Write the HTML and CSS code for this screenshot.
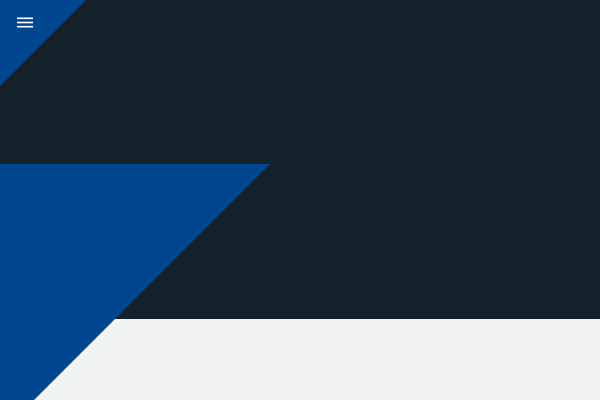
FILE: index.html
```html
<!DOCTYPE html>
<html>
<head>
<meta charset="utf-8">
<link rel="stylesheet" href="styles.css">
</head>
<body>
<div class="page">
  <div class="shape shape-top"></div>
  <div class="shape shape-mid"></div>
  <section class="hero">
    <header class="header">
      <button class="menu" aria-label="Menu">
        <svg width="16" height="11" viewBox="0 0 16 11"><rect x="0" y="0.5" width="16" height="1.6" fill="#fff"/><rect x="0" y="4.7" width="16" height="1.6" fill="#fff"/><rect x="0" y="8.9" width="16" height="1.6" fill="#fff"/></svg>
      </button>
    </header>
  </section>
  <section class="content"></section>
</div>
</body>
</html>
```
FILE: styles.css
```css
html, body {
  margin: 0;
  padding: 0;
  font-family: "Roboto", "Liberation Sans", sans-serif;
  overflow: hidden;
}
.page {
  position: relative;
  width: 600px;
  height: 400px;
  overflow: hidden;
  background: #f1f3f2;
}
.hero {
  height: 319px;
  background: #15212b;
}
.content {
  height: 81px;
  background: #f1f3f2;
}
.header {
  position: relative;
  z-index: 2;
  display: flex;
  padding: 17px 0 0 17px;
}
.menu {
  display: flex;
  padding: 0;
  margin: 0;
  border: 0;
  background: transparent;
  cursor: pointer;
}
.shape {
  position: absolute;
  left: 0;
  background: #00478f;
  z-index: 1;
}
.shape-top {
  top: 0;
  width: 86px;
  height: 86px;
  clip-path: polygon(0 0, 100% 0, 0 100%);
}
.shape-mid {
  top: 164px;
  width: 270px;
  height: 236px;
  clip-path: polygon(0 0, 100% 0, 34px 100%, 0 100%);
}
```
